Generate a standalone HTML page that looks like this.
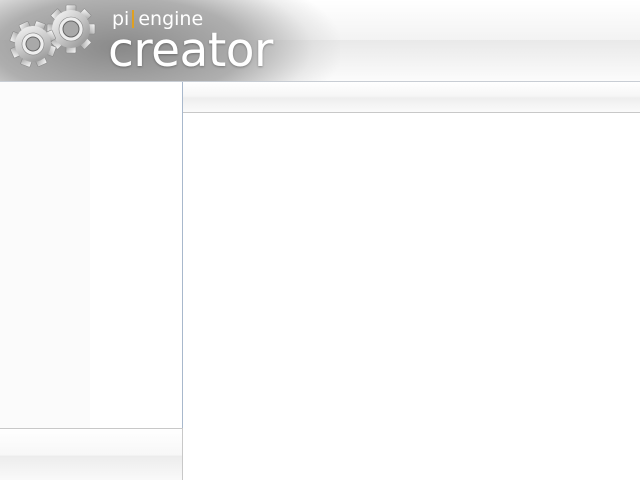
<!DOCTYPE html>
<html><head><style>
*{margin:0;padding:0;box-sizing:border-box}
body{width:640px;height:480px;overflow:hidden;background:#fff;font-family:"DejaVu Sans","Liberation Sans",sans-serif;position:relative}
#hdr{position:absolute;left:0;top:0;width:640px;height:82px;border-bottom:1px solid #c8cdd4;overflow:hidden;
background:linear-gradient(#fff 0,#f3f3f3 40px,#e9e9e9 40px,#fbfbfb 80px)}
#logobg{position:absolute;left:-60px;top:-40px;width:400px;height:160px;
background:radial-gradient(ellipse at 45% 55%,rgba(120,120,120,.85) 0,rgba(150,150,150,.75) 40%,rgba(200,200,200,.3) 62%,rgba(255,255,255,0) 72%)}
#t1{position:absolute;left:112px;top:8px;color:#fff;font-size:19px}
#t1 b{display:inline-block;width:2px;height:18px;background:#e0a020;vertical-align:-3px;margin:0 4px 0 3px}
#t2{position:absolute;left:108px;top:23px;color:#fff;font-size:47px;letter-spacing:-0.5px;text-shadow:0 1px 2px rgba(0,0,0,.3)}
#side{position:absolute;left:0;top:82px;width:183px;height:346px;border-right:1px solid #a8b8cc;background:#fff}
#side .c{position:absolute;left:0;top:0;width:90px;height:100%;background:#fbfbfb}
#bot{position:absolute;left:0;top:428px;width:183px;height:52px;border-top:1px solid #c8c8c8;border-right:1px solid #c8c8c8;
background:linear-gradient(#fff 0,#f7f7f7 26px,#ececec 27px,#fafafa 52px)}
#tb{position:absolute;left:183px;top:82px;width:457px;height:31px;border-bottom:1px solid #c8c8c8;
background:linear-gradient(#fff 0,#f6f6f6 14px,#eeeeee 16px,#fafafa 30px)}
</style></head><body>
<div id="hdr"><div id="logobg"></div>
<svg style="position:absolute;left:0;top:0" width="110" height="80" viewBox="0 0 110 80">
<defs><linearGradient id="g" x1="0" y1="0" x2="1" y2="1"><stop offset="0" stop-color="#fafafa"/><stop offset=".5" stop-color="#c8c8c8"/><stop offset="1" stop-color="#8a8a8a"/></linearGradient></defs>
<g transform="translate(71,29)">
<g fill="url(#g)" stroke="#888" stroke-width=".6">
<rect x="-5" y="-24" width="10" height="10" rx="1"/><rect x="-5" y="-24" width="10" height="10" rx="1" transform="rotate(45)"/><rect x="-5" y="-24" width="10" height="10" rx="1" transform="rotate(90)"/><rect x="-5" y="-24" width="10" height="10" rx="1" transform="rotate(135)"/><rect x="-5" y="-24" width="10" height="10" rx="1" transform="rotate(180)"/><rect x="-5" y="-24" width="10" height="10" rx="1" transform="rotate(225)"/><rect x="-5" y="-24" width="10" height="10" rx="1" transform="rotate(270)"/><rect x="-5" y="-24" width="10" height="10" rx="1" transform="rotate(315)"/>
<circle r="19" stroke="none"/>
<circle r="12" fill="#eee"/></g>
<circle r="8" fill="#a9a9a9" stroke="#666"/></g>
<g transform="translate(33,44) rotate(20)">
<g fill="url(#g)" stroke="#888" stroke-width=".6">
<rect x="-5" y="-23" width="10" height="10" rx="1"/><rect x="-5" y="-23" width="10" height="10" rx="1" transform="rotate(45)"/><rect x="-5" y="-23" width="10" height="10" rx="1" transform="rotate(90)"/><rect x="-5" y="-23" width="10" height="10" rx="1" transform="rotate(135)"/><rect x="-5" y="-23" width="10" height="10" rx="1" transform="rotate(180)"/><rect x="-5" y="-23" width="10" height="10" rx="1" transform="rotate(225)"/><rect x="-5" y="-23" width="10" height="10" rx="1" transform="rotate(270)"/><rect x="-5" y="-23" width="10" height="10" rx="1" transform="rotate(315)"/>
<circle r="18" stroke="none"/>
<circle r="11" fill="#eee"/></g>
<circle r="7" fill="#a9a9a9" stroke="#666"/></g>
</svg>
<div id="t1">pi<b></b>engine</div>
<div id="t2">creator</div>
</div>
<div id="side"><div class="c"></div></div>
<div id="bot"></div>
<div id="tb"></div>
</body></html>
